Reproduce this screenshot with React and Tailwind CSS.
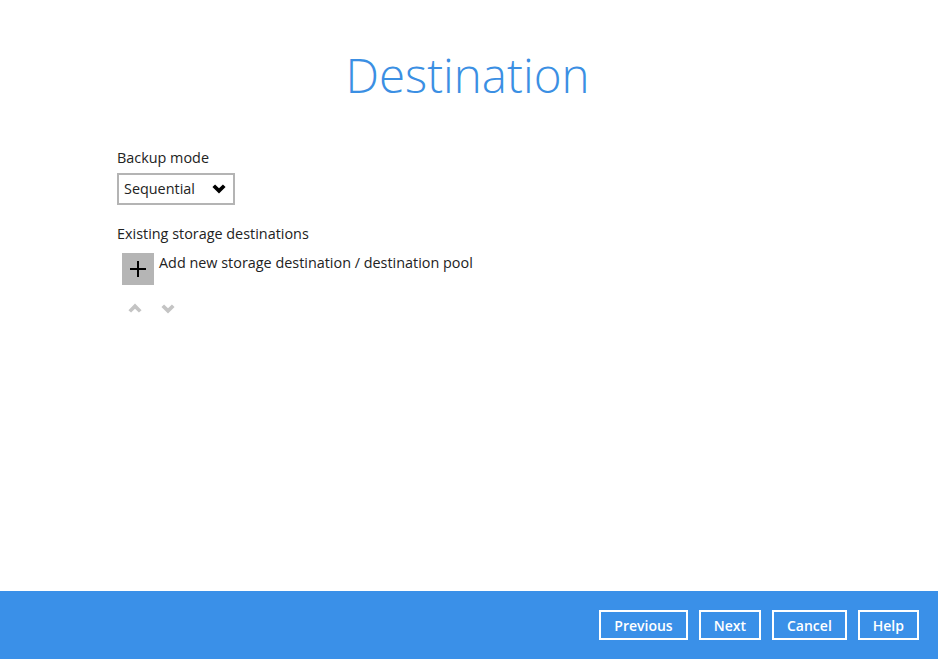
const font = { fontFamily: '"Open Sans", "Noto Sans", sans-serif' };

const ChevronDown = ({ className }) => (
  <svg className={className} viewBox="0 0 16 12" fill="currentColor">
    <path d="M0.5 3 L3.5 0.3 L8 4.6 L12.5 0.3 L15.5 3 L8 10.5 Z" />
  </svg>
);

const ChevronUp = ({ className }) => (
  <svg className={className} viewBox="0 0 16 12" fill="currentColor">
    <path d="M0.5 9 L3.5 11.7 L8 7.4 L12.5 11.7 L15.5 9 L8 1.5 Z" />
  </svg>
);

export default function App() {
  const buttons = ["Previous", "Next", "Cancel", "Help"];

  return (
    <div className="w-[938px] h-[659px] bg-white flex flex-col text-[#222]" style={font}>
      {/* Content */}
      <div className="flex-1 flex flex-col">
        <h1 className="text-center text-[47.5px] font-light text-[#3b8fe3] mt-[44px] leading-[62px] pr-[3px]">
          Destination
        </h1>

        <div className="pl-[117px] mt-[42px]">
          <div className="text-[14.4px] leading-[20px]">Backup mode</div>
          <div className="mt-[5px] w-[118px] h-[32px] border-2 border-[#b4b4b4] flex items-center justify-between pl-[5px] pr-[7px]">
            <span className="text-[14.4px]">Sequential</span>
            <ChevronDown className="w-[14px] h-[11px] text-black" />
          </div>

          <div className="text-[14.4px] leading-[20px] mt-[19px]">Existing storage destinations</div>
          <div className="flex items-start mt-[9px] ml-[5px]">
            <div className="w-[32px] h-[32px] bg-[#b5b5b5] flex items-center justify-center">
              <svg className="w-[18px] h-[18px]" viewBox="0 0 18 18" stroke="black" strokeWidth="2">
                <path d="M9 1 V17 M1 9 H17" />
              </svg>
            </div>
            <span className="text-[14.4px] leading-[20px] ml-[5px]">
              Add new storage destination / destination pool
            </span>
          </div>
          <div className="flex items-center gap-[19px] mt-[15px] ml-[11px] text-[#c4c4c4]">
            <ChevronUp className="w-[14px] h-[11px]" />
            <ChevronDown className="w-[14px] h-[11px] mt-[4px]" />
          </div>
        </div>
      </div>

      {/* Footer */}
      <div className="h-[68px] bg-[#3a90e8] flex items-center justify-end pr-[19px] gap-[11px]">
        {buttons.map((b) => (
          <button
            key={b}
            className="h-[30px] border-2 border-white text-white text-[14px] font-semibold px-[13px]"
          >
            {b}
          </button>
        ))}
      </div>
    </div>
  );
}
